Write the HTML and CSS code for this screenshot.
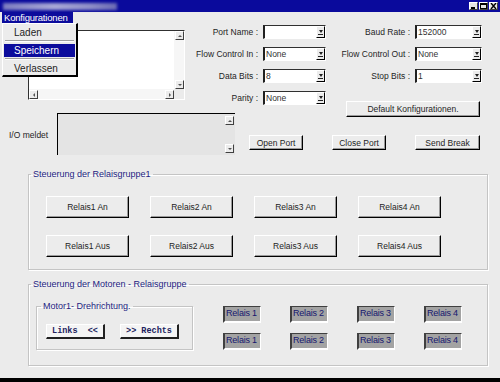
FILE: index.html
```html
<!DOCTYPE html>
<html lang="de">
<head>
<meta charset="UTF-8" />
<title>Relais Steuerung</title>
<link rel="stylesheet" href="styles.css">
</head>
<body>

<div class="window">
  <div class="titlebar">
    <div class="title-blur"></div>
    <div class="win-btns">
      <span class="wb"><svg width="7" height="6" viewBox="0 0 7 6"><rect x="1" y="4" width="4" height="2" fill="#000"/></svg></span>
      <span class="wb"><svg width="7" height="6" viewBox="0 0 7 6"><rect x="0.5" y="0.5" width="6" height="5" fill="none" stroke="#000"/><rect x="0" y="0" width="7" height="2" fill="#000"/></svg></span>
      <span class="wb"><svg width="7" height="6" viewBox="0 0 7 6"><path d="M1 0 L6 6 M6 0 L1 6" stroke="#000" stroke-width="1.4"/></svg></span>
    </div>
  </div>

  <div class="menubar">
    <div class="menu">Konfigurationen
      <div class="dropdown">
        <div class="dropdown-item">Laden</div>
        <div class="dropdown-sep"></div>
        <div class="dropdown-item active">Speichern</div>
        <div class="dropdown-sep"></div>
        <div class="dropdown-item">Verlassen</div>
      </div>
    </div>
  </div>

  <div class="top">
    <div class="log">
      <div class="log-text"></div>
      <div class="vscroll"><span class="sb-btn up"></span><span class="sb-btn down"></span></div>
      <div class="hscroll"><span class="sb-btn left"></span><span class="sb-btn right"></span></div>
      <div class="corner"></div>
    </div>

    <div class="form">
      <div class="label">Port Name :</div>
      <div class="combo"><span class="combo-val"></span><span class="combo-arrow"></span></div>
      <div class="label">Baud Rate :</div>
      <div class="combo"><span class="combo-val">152000</span><span class="combo-arrow"></span></div>

      <div class="label">Flow Control In :</div>
      <div class="combo"><span class="combo-val">None</span><span class="combo-arrow"></span></div>
      <div class="label">Flow Control Out :</div>
      <div class="combo"><span class="combo-val">None</span><span class="combo-arrow"></span></div>

      <div class="label">Data Bits :</div>
      <div class="combo"><span class="combo-val">8</span><span class="combo-arrow"></span></div>
      <div class="label">Stop Bits :</div>
      <div class="combo"><span class="combo-val">1</span><span class="combo-arrow"></span></div>

      <div class="label label-top">Parity :</div>
      <div class="combo combo-top"><span class="combo-val">None</span><span class="combo-arrow"></span></div>
      <div class="btn btn-default">Default Konfigurationen.</div>
    </div>
  </div>

  <div class="io-row">
    <div class="io-label">I/O meldet</div>
    <div class="io-log">
      <div class="vscroll vscroll-flat"><span class="sb-btn up"></span><span class="sb-btn down"></span></div>
    </div>
    <div class="port-btns">
      <div class="btn btn-port">Open Port</div>
      <div class="btn btn-port">Close Port</div>
      <div class="btn btn-port btn-break">Send Break</div>
    </div>
  </div>

  <fieldset class="group group-relais">
    <legend>Steuerung der Relaisgruppe1</legend>
    <div class="relais-grid">
      <div class="btn">Relais1 An</div>
      <div class="btn">Relais2 An</div>
      <div class="btn">Relais3 An</div>
      <div class="btn">Relais4 An</div>
      <div class="btn">Relais1 Aus</div>
      <div class="btn">Relais2 Aus</div>
      <div class="btn">Relais3 Aus</div>
      <div class="btn">Relais4 Aus</div>
    </div>
  </fieldset>

  <fieldset class="group group-motor">
    <legend>Steuerung der Motoren - Relaisgruppe</legend>
    <div class="motor-row">
      <fieldset class="group group-dir">
        <legend>Motor1- Drehrichtung.</legend>
        <div class="dir-btns">
          <div class="dir-btn">Links  &lt;&lt;</div>
          <div class="dir-btn">&gt;&gt; Rechts</div>
        </div>
      </fieldset>
      <div class="state-grid">
        <div class="state">Relais 1</div>
        <div class="state">Relais 2</div>
        <div class="state">Relais 3</div>
        <div class="state">Relais 4</div>
        <div class="state">Relais 1</div>
        <div class="state">Relais 2</div>
        <div class="state">Relais 3</div>
        <div class="state">Relais 4</div>
      </div>
    </div>
  </fieldset>
</div>

</body>
</html>
```

FILE: styles.css
```css
* { box-sizing: border-box; }
body {
  margin: 0; padding: 0;
  background: #000;
  font-family: 'Liberation Sans', Arial, sans-serif;
  font-size: 9px;
  color: #1e1e1e;
}
.window {
  width: 500px;
  height: 378px;
  background: #ebebeb;
  overflow: hidden;
}

/* title + menu */
.titlebar {
  height: 12px;
  background: #0a0a9c;
  display: flex;
  align-items: center;
  justify-content: space-between;
  padding: 0 2px 0 3px;
}
.title-blur {
  width: 114px;
  height: 7px;
  background: linear-gradient(90deg, #7c7cc0, #a8a8d6 45%, #9090c8 75%, #6a6ab4);
  filter: blur(1.5px);
}
.win-btns {
  display: flex;
  gap: 1px;
}
.wb {
  width: 9px;
  height: 8px;
  background: #e4e4e4;
  border: 1px solid;
  border-color: #fff #404040 #404040 #fff;
  display: flex;
  align-items: center;
  justify-content: center;
}
.wb svg { display: block; }
.menubar {
  height: 11px;
  padding-left: 2px;
}
.menu {
  position: relative;
  width: 71px;
  height: 11px;
  background: #0c0c9c;
  color: #fff;
  font-size: 9.5px;
  line-height: 11px;
  letter-spacing: -0.2px;
  padding-left: 2px;
  white-space: nowrap;
}
.dropdown {
  position: absolute;
  left: 0;
  top: 11px;
  width: 76px;
  background: #ececec;
  border-left: 1px solid #fff;
  border-top: 1px solid #fff;
  border-right: 2px solid #000;
  border-bottom: 2px solid #000;
  padding: 2px 1px 0;
  z-index: 5;
  color: #1e1e1e;
  letter-spacing: 0;
}
.dropdown-item {
  line-height: 13px;
  padding-left: 10px;
  font-size: 10px;
}
.dropdown-item.active {
  background: #0c0c9c;
  color: #fff;
}
.dropdown-sep {
  height: 2px;
  border-top: 1px solid #a0a0a0;
  border-bottom: 1px solid #fff;
  margin: 1px 1px 2px;
}

/* top area */
.top {
  display: flex;
  align-items: flex-start;
}
.log {
  margin: 7px 0 0 28px;
  width: 157px;
  height: 70px;
  display: grid;
  grid-template-columns: 1fr 10px;
  grid-template-rows: 1fr 10px;
  background: #fff;
  border-left: 1px solid #303030;
  border-top: 1px solid #303030;
  border-right: 1px solid #fff;
  border-bottom: 1px solid #fff;
}
.vscroll {
  display: flex;
  flex-direction: column;
  justify-content: space-between;
  align-items: flex-end;
  background: #f6f6f6;
}
.vscroll-flat {
  background: transparent;
  padding: 2px 0;
}
.hscroll {
  display: flex;
  justify-content: space-between;
  align-items: flex-end;
  background: #f6f6f6;
}
.corner { background: #ebebeb; }
.sb-btn {
  width: 9px;
  height: 9px;
  background: #ececec;
  border: 1px solid;
  border-color: #fff #404040 #404040 #fff;
  display: flex;
  align-items: center;
  justify-content: center;
}
.sb-btn::after {
  content: "";
  width: 0; height: 0;
}
.sb-btn.up::after {
  border-left: 2px solid transparent;
  border-right: 2px solid transparent;
  border-bottom: 2px solid #555;
}
.sb-btn.down::after {
  border-left: 2px solid transparent;
  border-right: 2px solid transparent;
  border-top: 2px solid #555;
}
.sb-btn.left::after {
  border-top: 2px solid transparent;
  border-bottom: 2px solid transparent;
  border-right: 2px solid #555;
}
.sb-btn.right::after {
  border-top: 2px solid transparent;
  border-bottom: 2px solid transparent;
  border-left: 2px solid #555;
}

.form {
  margin: 2px 0 0 10px;
  display: grid;
  grid-template-columns: 63px 63px 79px 67px;
  grid-template-rows: 14px 14px 14px 26px;
  column-gap: 5px;
  row-gap: 8px;
}
.label {
  text-align: right;
  line-height: 14px;
  white-space: nowrap;
  font-size: 8.5px;
}
.label-top, .combo-top { align-self: start; }
.combo {
  height: 14px;
  display: flex;
  background: #fff;
  border-left: 2px solid #202020;
  border-top: 1px solid #303030;
  border-right: 1px solid #fff;
  border-bottom: 1px solid #fff;
}
.combo-val {
  flex: 1;
  padding-left: 1px;
  line-height: 12px;
  font-size: 8.5px;
  color: #333;
}
.combo-arrow {
  width: 9px;
  background: #ececec;
  border: 1px solid;
  border-color: #fff #000 #000 #fff;
  display: flex;
  flex-direction: column;
  align-items: center;
  justify-content: center;
  gap: 1px;
}
.combo-arrow::before {
  content: "";
  border-left: 2px solid transparent;
  border-right: 2px solid transparent;
  border-top: 3px solid #222;
}
.combo-arrow::after {
  content: "";
  width: 5px;
  height: 1px;
  background: #222;
}

/* buttons */
.btn {
  background: #ececec;
  border-top: 1px solid #fff;
  border-left: 1px solid #fff;
  border-right: 1px solid #000;
  border-bottom: 1px solid #000;
  box-shadow: inset -1px -1px 0 #9a9a9a;
  display: flex;
  align-items: center;
  justify-content: center;
  white-space: nowrap;
  font-size: 8.5px;
}
.btn-default {
  grid-column: 3 / 5;
  align-self: end;
  justify-self: end;
  width: 134px;
  height: 16px;
  margin-right: 2px;
}

.io-row {
  display: flex;
  margin-top: -4px;
  padding-left: 9px;
}
.io-label {
  width: 48px;
  align-self: center;
  padding-top: 2px;
  font-size: 8.5px;
}
.io-log {
  width: 178px;
  height: 42px;
  background: #e4e4e4;
  border-left: 1px solid #000;
  border-top: 1px solid #000;
  display: flex;
  justify-content: flex-end;
  padding-right: 1px;
}
.port-btns {
  display: flex;
  gap: 29px;
  align-self: flex-end;
  margin: 0 0 5px 14px;
}
.btn-port {
  width: 54px;
  height: 15px;
}
.btn-break { width: 65px; }

/* groups */
.group {
  border: 1px solid #c4c4c4;
  box-shadow: inset 1px 1px 0 #fff, 1px 1px 0 #fff;
  margin: 0;
  min-width: 0;
}
.group legend {
  color: #1e1e82;
  font-size: 9px;
  line-height: 11px;
  padding: 0 2px;
}
.group-relais {
  margin: 14px 12px 0 28px;
  padding: 16px 0 12px 17px;
}
.group-relais legend { margin-left: -15px; }
.relais-grid {
  display: grid;
  grid-template-columns: repeat(4, 83px);
  grid-auto-rows: 22px;
  column-gap: 21px;
  row-gap: 17px;
}
.group-motor {
  margin: 9px 12px 0 28px;
  padding: 11px 0 15px 7px;
}
.group-motor legend { margin-left: -5px; }
.motor-row {
  display: flex;
  align-items: flex-start;
}
.group-dir {
  width: 157px;
  padding: 12px 0 10px 9px;
}
.group-dir legend { margin-left: -5px; }
.dir-btns {
  display: flex;
  gap: 15px;
}
.dir-btn {
  width: 59px;
  height: 15px;
  background: #f4f4f4;
  border-top: 1px solid #fff;
  border-left: 1px solid #fff;
  border-right: 2px solid #202020;
  border-bottom: 2px solid #202020;
  font-family: 'Liberation Mono', 'Courier New', monospace;
  font-weight: bold;
  font-size: 8.5px;
  color: #22225e;
  white-space: pre;
  display: flex;
  align-items: center;
  justify-content: center;
}
.state-grid {
  margin: 5px 0 0 30px;
  display: grid;
  grid-template-columns: repeat(4, 38px);
  grid-auto-rows: 17px;
  column-gap: 29px;
  row-gap: 10px;
}
.state {
  background: #a3a3a3;
  border-left: 2px solid #404040;
  border-top: 1px solid #404040;
  border-right: 1px solid #fff;
  border-bottom: 2px solid #fff;
  color: #16166e;
  font-size: 9px;
  letter-spacing: -0.2px;
  line-height: 13px;
  padding-left: 1px;
  white-space: nowrap;
  overflow: hidden;
}
```
